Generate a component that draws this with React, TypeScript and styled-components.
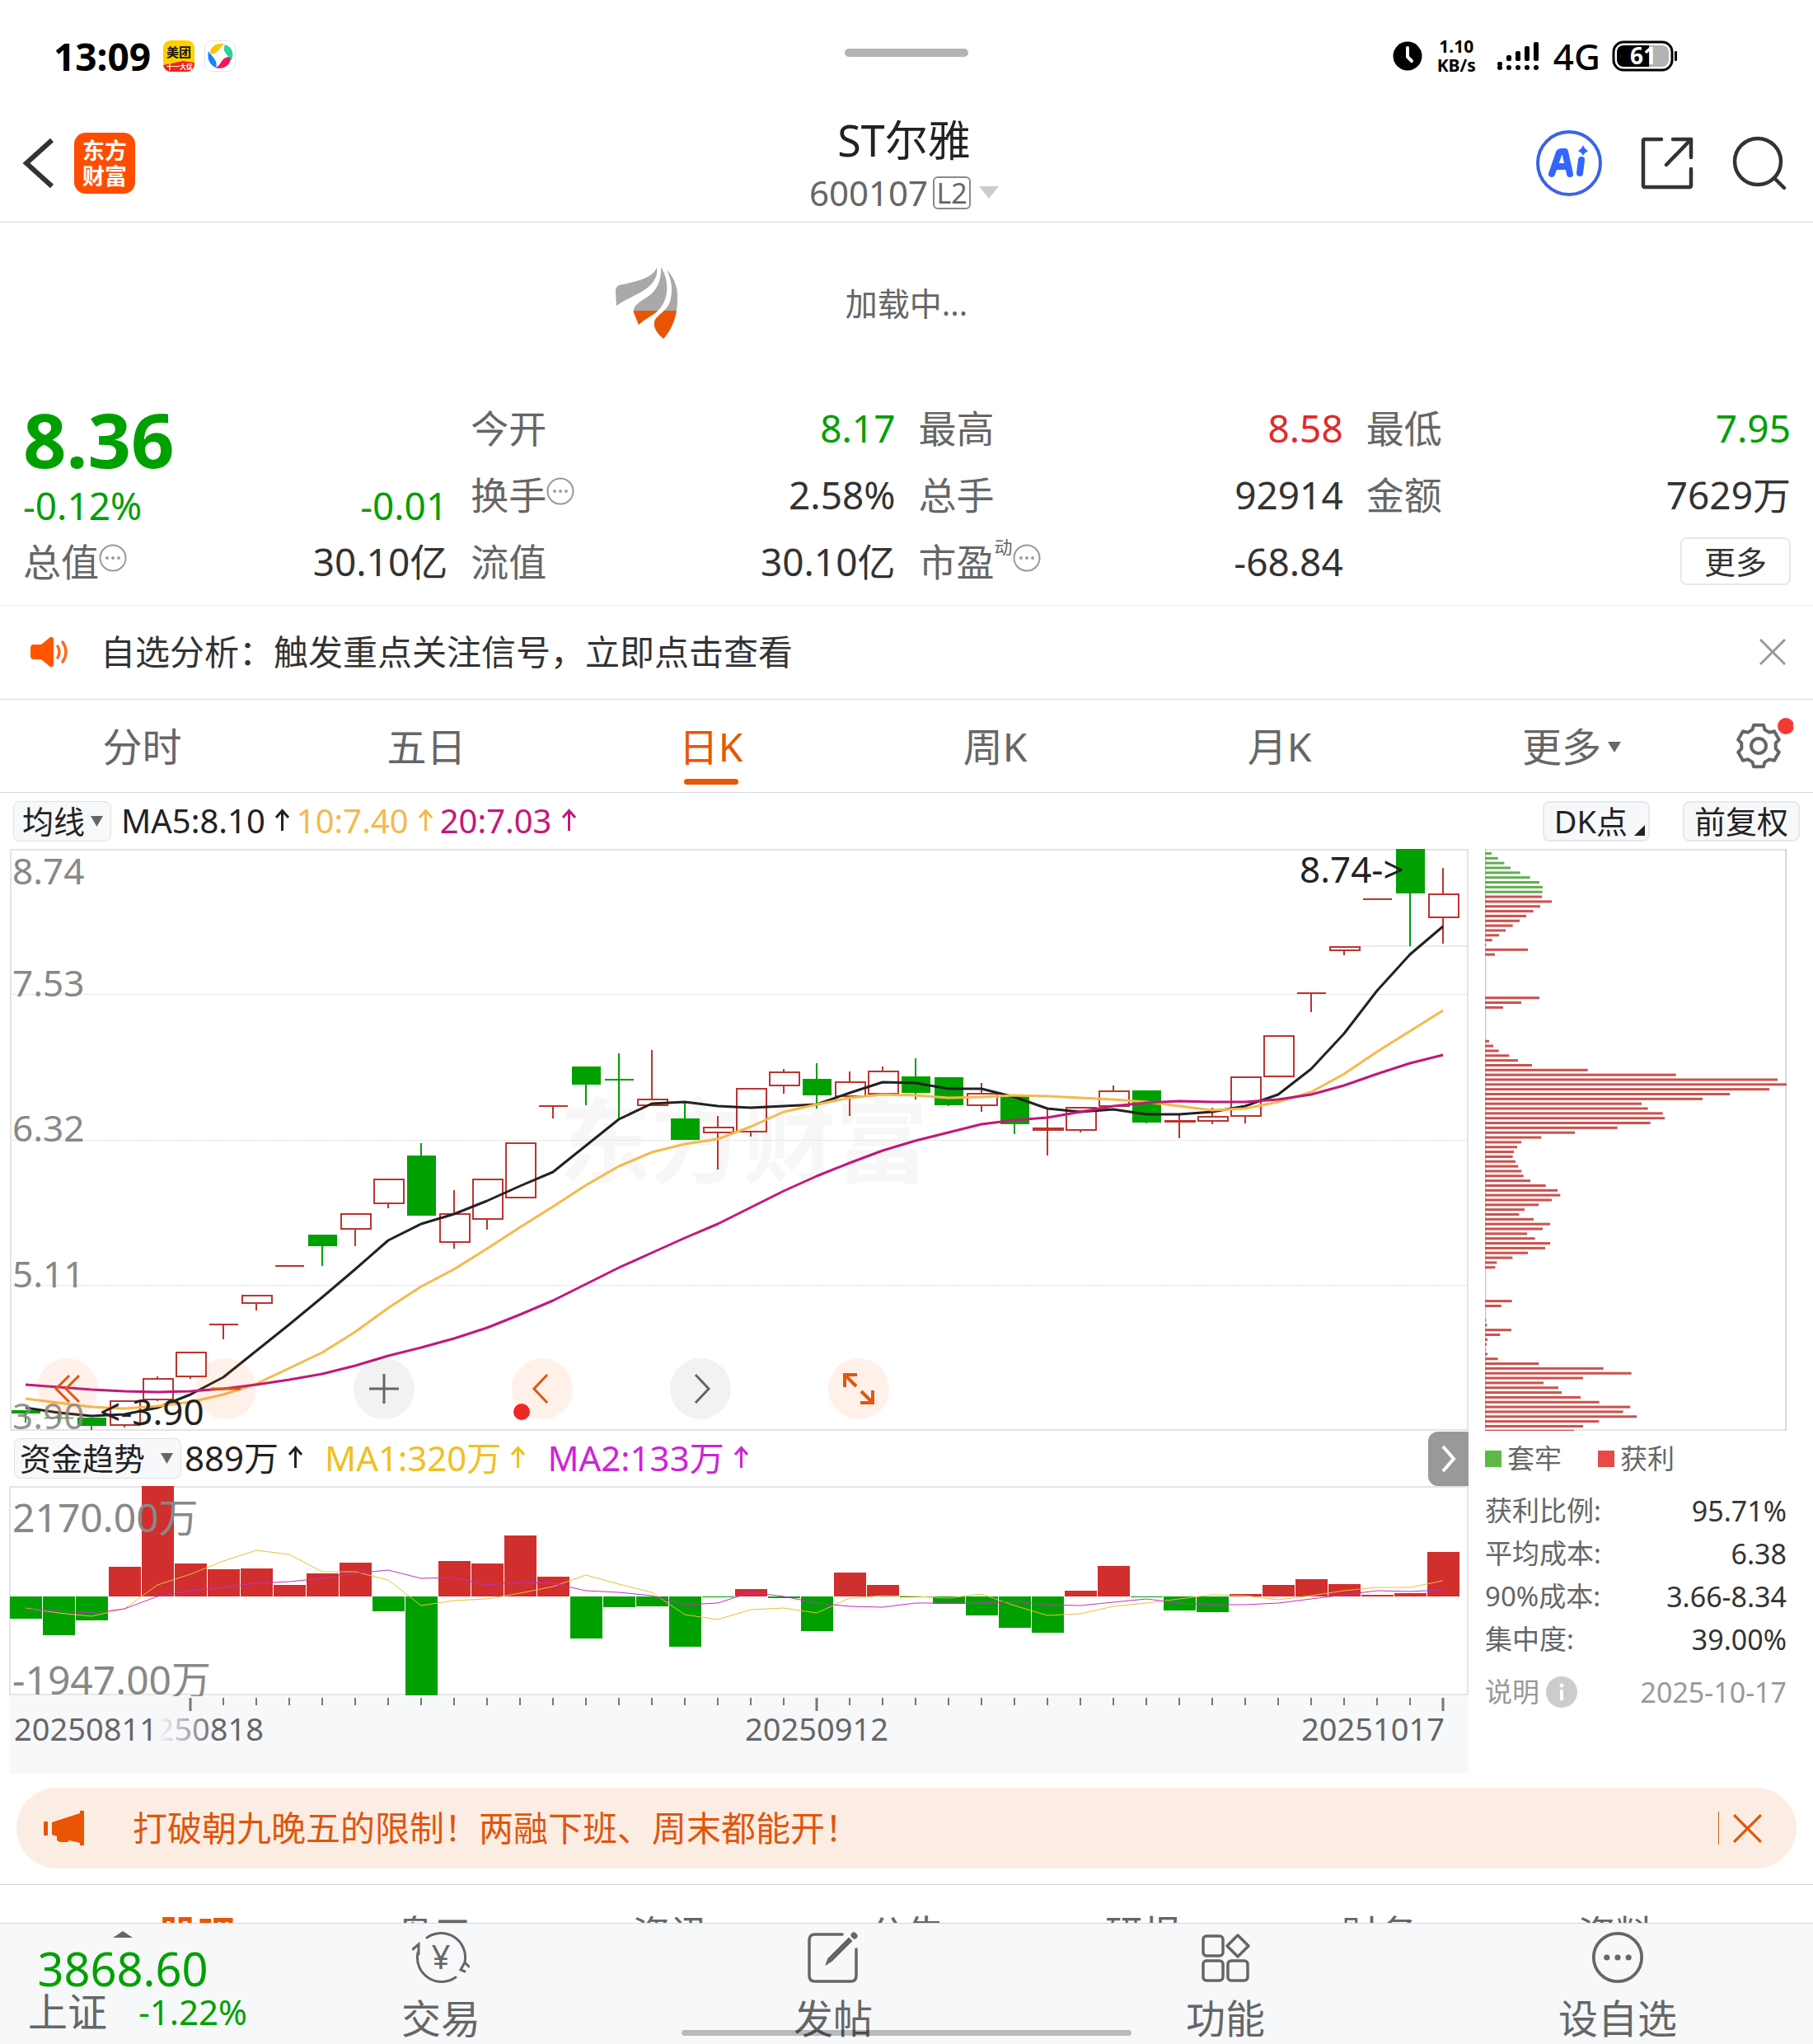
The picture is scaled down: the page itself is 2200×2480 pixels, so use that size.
import React from "react";
import styled, { createGlobalStyle } from "styled-components";

const C = {
  green: "#00a000",
  up: "#d02f2d",
  orange: "#ea5504",
  ink: "#333333",
  grey: "#666666",
  light: "#999999",
  line: "#d8d8d8",
  panel: "#f7f8fa",
  ma10: "#f5b94c",
  ma20: "#c2187a",
};
const FONT = `"Noto Sans", "Noto Sans CJK SC", sans-serif`;

const Global = createGlobalStyle`
  * { box-sizing: border-box; }
  body { margin: 0; background: #fff; color: ${C.ink}; font-family: ${FONT}; }
  button, select { font-family: inherit; color: inherit; background: none; border: 0; padding: 0; margin: 0; cursor: pointer; }
  svg { display: block; flex: none; }
  svg text { font-family: ${FONT}; }
  dl, dd, dt, h1, p { margin: 0; font-weight: 400; }
`;

/* ---------- data ---------- */

type Kind = "up" | "down";
type Candle = [Kind, number, number, number, number]; // kind, high, body top, body bottom, low

const candles: Candle[] = [
  ["down", 681, 681, 685, 696], ["down", 686, 690, 691, 696], ["down", 690, 690, 700, 705],
  ["up", 670, 670, 699, 702], ["up", 640, 643, 668, 670], ["up", 611, 611, 640, 643],
  ["up", 577, 577, 577, 595], ["up", 542, 542, 551, 560], ["up", 506, 506, 506, 506],
  ["down", 468, 468, 482, 506], ["up", 443, 443, 461, 482], ["up", 401, 401, 430, 436],
  ["down", 357, 372, 445, 445], ["up", 414, 443, 477, 485], ["up", 401, 401, 449, 462],
  ["up", 357, 357, 423, 423], ["up", 312, 312, 312, 327], ["down", 264, 264, 286, 311],
  ["down", 248, 279, 281, 327], ["up", 244, 304, 311, 311], ["down", 306, 327, 353, 353],
  ["up", 324, 338, 344, 389], ["up", 291, 291, 343, 349], ["up", 267, 271, 287, 297],
  ["down", 260, 279, 299, 315], ["up", 270, 283, 300, 324], ["up", 264, 270, 297, 297],
  ["down", 254, 276, 296, 304], ["down", 277, 277, 311, 312], ["up", 284, 297, 311, 319],
  ["down", 300, 300, 334, 346], ["up", 315, 339, 341, 372], ["up", 314, 314, 341, 344],
  ["up", 287, 294, 312, 312], ["down", 293, 293, 332, 333], ["up", 323, 330, 331, 351],
  ["up", 314, 325, 330, 334], ["up", 277, 277, 324, 333], ["up", 227, 227, 276, 276],
  ["up", 175, 175, 175, 198], ["up", 119, 119, 123, 129], ["up", 61, 61, 61, 61],
  ["down", 0, 0, 54, 118], ["up", 23, 55, 83, 115],
];

const ma5 = [678, 684, 688, 686, 678, 662, 641, 609, 577, 544, 510, 475, 455, 443, 427, 409, 392, 360, 328, 309, 307, 312, 314, 312, 310, 296, 283, 284, 291, 291, 301, 315, 319, 316, 322, 322, 319, 312, 298, 267, 224, 172, 128, 94];
const ma10 = [667, 672, 677, 679, 676, 671, 662, 649, 630, 611, 586, 557, 531, 510, 485, 459, 434, 408, 385, 368, 358, 352, 337, 319, 310, 302, 298, 299, 302, 301, 299, 300, 302, 304, 307, 312, 317, 315, 307, 295, 273, 246, 221, 196];
const ma20 = [650, 653, 656, 658, 659, 658, 655, 650, 644, 637, 627, 615, 605, 594, 581, 565, 548, 528, 508, 490, 472, 455, 435, 415, 397, 381, 366, 354, 344, 334, 329, 326, 319, 312, 308, 306, 307, 307, 304, 298, 287, 273, 260, 250];

const FLOW_ZERO = 134;
const flow = [161, 181, 163, 98, 0, 94, 101, 100, 120, 106, 93, 152, 254, 91, 94, 60, 110, 185, 147, 146, 195, 135, 125, 136, 176, 105, 120, 135, 143, 157, 172, 178, 127, 97, 135, 151, 153, 131, 120, 113, 119, 132, 130, 80];
const flowMa1 = [148, 154, 158, 149, 120, 107, 91, 78, 83, 104, 104, 114, 145, 139, 137, 130, 122, 108, 119, 129, 156, 162, 150, 148, 154, 136, 133, 134, 136, 131, 145, 157, 155, 146, 142, 137, 132, 133, 138, 133, 127, 123, 123, 115];
const flowMa2 = [149, 152, 154, 149, 134, 127, 123, 118, 116, 112, 106, 102, 112, 111, 120, 117, 118, 127, 129, 133, 144, 142, 129, 134, 142, 146, 147, 142, 142, 142, 140, 144, 145, 141, 137, 142, 144, 144, 142, 137, 132, 127, 128, 126];

const CHIP_MAX = 1098;
const gap = (n: number): number[] => Array(n).fill(0);
const chips = [
  24, 47, 70, 93, 128, 164, 198, 210, 209, 207, 243, 201, 176, 150, 126, 101, 75, 51, 26, 3, 156, 36,
  ...gap(8), 198, 132, 66, ...gap(6),
  15, 30, 50, 88, 120, 171, 374, 695, 1065, 1098, 1035, 891, 792, 570, 593, 647, 654, 602, 482, 327, 205, 132, 117, 105, 101, 111, 121, 133, 140, 165, 221, 264, 274, 243, 195, 144, 124, 177, 237, 210, 153, 182, 237, 219, 156, 100, 43, 37,
  ...gap(6), 98, 59, 0, 0,
  3, 7, 96, 55, 9, 6, 2, 9, 47, 196, 431, 533, 357, 213, 267, 279, 348, 416, 529, 503, 552, 415, 357, 324,
];
const CHIP_GREEN = 9;

const cx = (i: number) => 19 + 40 * i;
const poly = (a: number[]) => a.map((y, i) => `${cx(i)},${y}`).join(" ");

/* ---------- layout parts ---------- */

const Page = styled.div`
  display: flex;
  flex-direction: column;
  min-height: 100vh;
  overflow: hidden;
`;

const Status = styled.div`
  position: relative;
  display: flex;
  align-items: center;
  height: 136px;
  padding: 0 164px 0 65px;
  color: #000;
`;
const Clock = styled.span`
  font-size: 46px;
  font-weight: 700;
  line-height: 52px;
  margin-right: 15px;
`;
const AppIcons = styled.div`
  display: flex;
  gap: 12px;
`;
const Grip = styled.span`
  position: absolute;
  left: 50%;
  top: 59px;
  width: 150px;
  height: 10px;
  margin-left: -75px;
  border-radius: 5px;
  background: #b3b3b3;
`;
const StatusRight = styled.div`
  display: flex;
  align-items: center;
  margin-left: auto;
`;
const Speed = styled.span`
  margin: 0 26px 0 18px;
  text-align: center;
  font-size: 21px;
  font-weight: 700;
  line-height: 23px;
`;
const Network = styled.span`
  margin: 0 14px 0 16px;
  font-size: 44px;
  font-weight: 500;
  line-height: 52px;
`;

const Header = styled.header`
  display: grid;
  grid-template-columns: 1fr auto 1fr;
  grid-template-rows: 100%;
  align-items: center;
  height: 134px;
  padding: 0 32px 10px 26px;
  border-bottom: 1px solid ${C.line};
`;
const HeadSide = styled.div<{ $end?: boolean }>`
  display: flex;
  align-items: center;
  justify-content: ${(p) => (p.$end ? "flex-end" : "flex-start")};
  gap: ${(p) => (p.$end ? 47 : 24)}px;
`;
const IconButton = styled.button`
  display: flex;
  align-items: center;
  justify-content: center;
`;
const Brand = styled.a`
  display: flex;
  flex-direction: column;
  align-items: center;
  justify-content: center;
  width: 74px;
  height: 74px;
  border-radius: 14px;
  background: #ff4d00;
  color: #fff;
  font-size: 27px;
  font-weight: 700;
  line-height: 31px;
  text-decoration: none;
`;
const TitleBox = styled.div`
  padding-top: 8px;
  text-align: center;
`;
const Title = styled.h1`
  font-size: 52px;
  line-height: 64px;
  color: #222;
`;
const Code = styled.button`
  display: inline-flex;
  align-items: center;
  gap: 6px;
  font-size: 42px;
  line-height: 64px;
  color: ${C.grey};
  svg { margin-left: 4px; }
`;
const Level = styled.span`
  width: 46px;
  height: 40px;
  border: 2px solid #8a8a8a;
  border-radius: 6px;
  font-size: 34px;
  line-height: 37px;
`;

const Loader = styled.div`
  display: grid;
  grid-template-columns: 1fr auto 1fr;
  align-items: center;
  height: 196px;
  font-size: 39px;
  line-height: 48px;
  color: ${C.grey};
  svg { justify-self: end; margin-right: 202px; }
`;

const Stats = styled.dl`
  display: grid;
  grid-template-columns: repeat(4, 1fr);
  grid-template-rows: repeat(3, 81px);
  column-gap: 28px;
  padding: 12px 27px 13px 28px;
  border-bottom: 1px solid #ececec;
`;
const Quote = styled.div`
  grid-row: span 2;
  color: ${C.green};
`;
const Price = styled.p`
  font-size: 92px;
  font-weight: 700;
  line-height: 110px;
`;
const Change = styled.p`
  display: flex;
  justify-content: space-between;
  font-size: 46px;
  line-height: 50px;
`;
const Stat = styled.div`
  display: flex;
  align-items: center;
  justify-content: space-between;
  font-size: 46px;
  line-height: 60px;
`;
const StatName = styled.dt`
  display: flex;
  align-items: center;
  color: ${C.grey};
  svg { margin-bottom: 8px; }
`;
const Sup = styled.span`
  align-self: flex-start;
  font-size: 22px;
  line-height: 24px;
`;
const StatValue = styled.dd<{ $tone?: string }>`
  color: ${(p) => p.$tone || C.ink};
`;
const MoreButton = styled.button`
  align-self: center;
  justify-self: end;
  width: 134px;
  height: 58px;
  border: 2px solid #e8e8e8;
  border-radius: 8px;
  font-size: 38px;
  line-height: 50px;
`;

const Notice = styled.div`
  display: flex;
  align-items: center;
  height: 114px;
  padding: 0 33px 2px 37px;
  border-bottom: 1px solid ${C.line};
  font-size: 42px;
  line-height: 52px;
  p { flex: 1; margin-left: 36px; }
`;

const Periods = styled.nav`
  display: flex;
  height: 113px;
  padding-right: 21px;
  border-bottom: 1px solid ${C.line};
`;
const Period = styled.button<{ $on?: boolean; $last?: boolean }>`
  position: relative;
  flex: ${(p) => (p.$last ? "0 0 364px" : "1")};
  display: flex;
  align-items: center;
  justify-content: center;
  gap: 8px;
  padding-top: 2px;
  font-size: 48px;
  line-height: 60px;
  color: ${(p) => (p.$on ? C.orange : C.grey)};
  &::after {
    content: "";
    display: ${(p) => (p.$on ? "block" : "none")};
    position: absolute;
    left: 50%;
    bottom: 9px;
    width: 66px;
    height: 7px;
    margin-left: -33px;
    border-radius: 4px;
    background: ${C.orange};
  }
`;
const GearButton = styled(IconButton)`
  flex: 0 0 90px;
`;

const Toolbar = styled.div<{ $sub?: boolean }>`
  position: relative;
  display: flex;
  align-items: center;
  height: 68px;
  padding: ${(p) => (p.$sub ? "0 0 0 5px" : "0 16px")};
  font-size: ${(p) => (p.$sub ? 42 : 40)}px;
  line-height: 50px;
`;
const Picker = styled.label`
  position: relative;
  display: flex;
  svg { position: absolute; right: 10px; top: 18px; pointer-events: none; }
`;
const Select = styled.select<{ $wide?: boolean }>`
  appearance: none;
  height: 49px;
  padding: ${(p) => (p.$wide ? "0 42px 0 6px" : "0 30px 0 10px")};
  border: 1px solid #dfe1e6;
  border-radius: 8px;
  background: ${C.panel};
  color: #222;
  font-size: 38px;
  line-height: 46px;
`;
const Reading = styled.span<{ $c: string; $gap: number }>`
  display: inline-flex;
  align-items: center;
  gap: 12px;
  margin-left: ${(p) => p.$gap}px;
  color: ${(p) => p.$c};
`;
const ToolEnd = styled.div`
  display: flex;
  gap: 40px;
  margin-left: auto;
`;
const ToolButton = styled.button<{ $corner?: boolean }>`
  display: flex;
  align-items: flex-end;
  gap: 8px;
  height: 49px;
  padding: 0 ${(p) => (p.$corner ? 4 : 12)}px 0 12px;
  border: 2px solid #e6e8ed;
  border-radius: 8px;
  background: ${C.panel};
  color: #222;
  font-size: 38px;
  line-height: 45px;
  svg { margin-bottom: 5px; }
`;

const Board = styled.div`
  display: grid;
  grid-template-columns: minmax(0, 1fr) 418px;
`;
const Charts = styled.div`
  padding-left: 12px;
  svg.plot { width: 100%; height: auto; overflow: visible; }
`;
const PlotBox = styled.div`
  position: relative;
`;
const Controls = styled.div`
  position: absolute;
  left: 33px;
  bottom: 13px;
  display: flex;
  gap: 118px;
`;
const Round = styled.button<{ $warm?: boolean }>`
  position: relative;
  display: flex;
  align-items: center;
  justify-content: center;
  width: 74px;
  height: 74px;
  border-radius: 50%;
  background: ${(p) => (p.$warm ? "rgba(255, 100, 20, 0.09)" : "rgba(0, 0, 0, 0.05)")};
  color: ${(p) => (p.$warm ? "#e2560f" : C.grey)};
`;
const Badge = styled.i`
  position: absolute;
  left: 2px;
  bottom: -1px;
  width: 20px;
  height: 20px;
  border-radius: 50%;
  background: #f02622;
`;
const Drawer = styled.button`
  display: flex;
  align-items: center;
  justify-content: center;
  width: 49px;
  height: 66px;
  margin: 2px 0 0 auto;
  border-radius: 12px 0 0 12px;
  background: #999;
`;

const Side = styled.aside`
  padding: 0 32px 0 20px;
  svg.chips { width: 100%; height: auto; }
`;
const Legend = styled.div`
  display: flex;
  align-items: center;
  gap: 44px;
  height: 67px;
  font-size: 33px;
  line-height: 44px;
  color: ${C.grey};
`;
const Key = styled.span<{ $c: string }>`
  display: flex;
  align-items: center;
  gap: 7px;
  &::before { content: ""; width: 20px; height: 20px; background: ${(p) => p.$c}; }
`;
const Facts = styled.dl`
  padding: 4px 0 12px;
`;
const Fact = styled.div<{ $dim?: boolean }>`
  display: flex;
  align-items: center;
  justify-content: space-between;
  height: 52px;
  font-size: 34px;
  line-height: 44px;
  color: ${(p) => (p.$dim ? C.light : C.grey)};
  dt { font-size: 33px; }
  dd { color: ${C.ink}; }
`;
const Explain = styled.button`
  display: flex;
  align-items: center;
  gap: 8px;
  font-size: 33px;
  line-height: 44px;
`;

const Banner = styled.div`
  display: flex;
  align-items: center;
  height: 98px;
  margin: 17px 20px 19px;
  padding: 0 42px 0 33px;
  border-radius: 49px;
  background: #fcede4;
  color: #e0560c;
  font-size: 42px;
  line-height: 52px;
  a { flex: 1; margin-left: 58px; color: inherit; text-decoration: none; }
`;
const Rule = styled.span`
  width: 1px;
  height: 40px;
  margin-right: 17px;
  background: #d9631f;
`;

const Sections = styled.nav`
  display: flex;
  height: 47px;
  padding: 28px 96px 0;
  overflow: hidden;
  border-top: 1px solid ${C.line};
`;
const Section = styled.a<{ $on?: boolean }>`
  flex: 1;
  text-align: center;
  font-size: 46px;
  font-weight: ${(p) => (p.$on ? 700 : 400)};
  line-height: 60px;
  color: ${(p) => (p.$on ? C.orange : C.grey)};
  text-decoration: none;
`;

const Dock = styled.footer`
  position: relative;
  display: grid;
  grid-template-columns: 296px repeat(4, 1fr);
  height: 147px;
  border-top: 1px solid ${C.line};
  background: ${C.panel};
  color: ${C.grey};
`;
const DockItem = styled.button`
  display: flex;
  flex-direction: column;
  align-items: center;
  padding: 9px 0 0 2px;
  font-size: 48px;
  line-height: 60px;
  svg { margin-bottom: 12px; }
`;
const Index = styled.button`
  display: flex;
  flex-direction: column;
  align-items: center;
  padding: 9px 0 0 2px;
`;
const IndexValue = styled.span`
  font-size: 56px;
  line-height: 60px;
  margin-top: 7px;
  color: ${C.green};
`;
const IndexRow = styled.span`
  display: flex;
  align-items: center;
  gap: 38px;
  margin-left: 36px;
  font-size: 48px;
  line-height: 46px;
  white-space: nowrap;
  b { font-size: 42px; font-weight: 400; color: ${C.green}; }
`;
const HomeBar = styled.span`
  position: absolute;
  left: 50%;
  bottom: 10px;
  width: 546px;
  height: 7px;
  margin-left: -273px;
  border-radius: 4px;
  background: rgba(0, 0, 0, 0.25);
`;

/* ---------- icons ---------- */

const Triangle = ({ w = 15, h = 13, c = C.grey, up = false }) => (
  <svg width={w} height={h} viewBox="0 0 10 10" preserveAspectRatio="none">
    <path d={up ? "M0 10L5 0L10 10Z" : "M0 0H10L5 10Z"} fill={c} />
  </svg>
);
const Corner = () => (
  <svg width="13" height="13" viewBox="0 0 13 13">
    <path d="M13 0V13H0Z" fill="#222" />
  </svg>
);
const Arrow = () => (
  <svg width="17" height="30" viewBox="0 0 17 30" fill="none" stroke="currentColor" strokeWidth="3" aria-label="↑">
    <path d="M8.500 27V3M1 11L8.500 2.500L16 11" />
  </svg>
);
const Cross = ({ s = 32, c = C.light, w = 3 }) => (
  <svg width={s} height={s} viewBox="0 0 32 32" stroke={c} strokeWidth={w} fill="none">
    <path d="M1 1L31 31M31 1L1 31" />
  </svg>
);
const Dots = ({ s = 34, c = C.light, w = 2 }) => (
  <svg width={s} height={s} viewBox="0 0 34 34" fill="none">
    <circle cx="17" cy="17" r="15.500" stroke={c} strokeWidth={w} />
    {[10, 17, 24].map((x) => (
      <circle key={x} cx={x} cy="17" r="1.900" fill={c} />
    ))}
  </svg>
);

const Meituan = () => (
  <svg width="38" height="38" viewBox="0 0 38 38">
    <clipPath id="mt"><rect width="38" height="38" rx="9" /></clipPath>
    <g clipPath="url(#mt)">
      <rect width="38" height="38" fill="#ffd000" />
      <path d="M0 30L24 25L38 27V38H0Z" fill="#f5201b" />
      <text x="19" y="20" fontSize="15" fontWeight="700" textAnchor="middle" fill="#111">美团</text>
      <text x="20" y="35" fontSize="8" fontWeight="700" textAnchor="middle" fill="#fff">十一大促</text>
    </g>
  </svg>
);
const Swirl = () => (
  <svg width="38" height="38" viewBox="0 0 38 38">
    <rect x=".5" y=".5" width="37" height="37" rx="9" fill="#fff" stroke="#e6e6e6" />
    <path d="M7 14C8 6 17 3 24 4C19 8 19 14 9 17Z" fill="#ffc400" />
    <path d="M25 5C34 8 37 17 32 25C30 18 22 15 24 8Z" fill="#2bd19a" />
    <path d="M5 13C3 22 6 30 14 33C17 25 10 21 5 13Z" fill="#1683ff" />
    <path d="M32 22C31 31 22 36 13 33C21 31 19 22 29 20Z" fill="#f5155d" />
  </svg>
);
const ClockIcon = () => (
  <svg width="36" height="36" viewBox="0 0 36 36">
    <circle cx="18" cy="18" r="17.500" />
    <path d="M18 8V19L23 24" stroke="#fff" strokeWidth="4" fill="none" strokeLinecap="round" />
  </svg>
);
const Signal = () => (
  <svg width="52" height="36" viewBox="0 0 52 36">
    {[28, 17, 12, 6, 1].map((y, i) => (
      <React.Fragment key={i}>
        <rect x={i * 11} y={i ? y : 25} width="6" height={i ? 24 - y : 5} rx="2" />
        <rect x={i * 11} y="29" width="6" height="6" rx="3" />
      </React.Fragment>
    ))}
  </svg>
);
const Battery = () => (
  <svg width="80" height="38" viewBox="0 0 80 38">
    <rect x="2" y="2" width="71" height="34" rx="12" fill="#fff" stroke="#000" strokeWidth="3" />
    <clipPath id="bt"><rect x="6" y="6" width="63" height="26" rx="8" /></clipPath>
    <g clipPath="url(#bt)">
      <rect x="6" y="6" width="39" height="26" />
      <rect x="45" y="6" width="24" height="26" fill="#b3b3b3" />
    </g>
    <rect x="76" y="13" width="3" height="12" rx="1" />
    <text x="38" y="29" fontSize="28" fontWeight="700" textAnchor="middle" fill="#fff">61</text>
  </svg>
);

const AiIcon = () => (
  <svg width="80" height="80" viewBox="0 0 80 80">
    <circle cx="40" cy="40" r="38" fill="none" stroke="#3b63e8" strokeWidth="4" />
    <path d="M19 53L28 27Q29 26 31 26H35L41 53M24 44H38" fill="none" stroke="#3366ff" strokeWidth="8" strokeLinejoin="round" strokeLinecap="round" />
    <path d="M55 36L53 52" stroke="#3366ff" strokeWidth="8" strokeLinecap="round" />
    <path d="M57 18Q59 23 63 25Q59 27 57 31Q55 27 51 25Q55 23 57 18Z" fill="#3366ff" />
  </svg>
);
const ShareIcon = () => (
  <svg width="64" height="64" viewBox="0 0 64 64" fill="none" stroke="#333" strokeWidth="4.500" strokeLinejoin="round" strokeLinecap="round">
    <path d="M25 3H5Q3 3 3 5V59Q3 61 5 61H59Q61 61 61 59V39M39 3H61V25M61 3L31 34" />
  </svg>
);
const SearchIcon = () => (
  <svg width="66" height="66" viewBox="0 0 66 66" fill="none" stroke="#333" strokeWidth="4.500" strokeLinecap="round">
    <circle cx="31" cy="31" r="28" />
    <path d="M51 51L63 63" />
  </svg>
);
const BackIcon = () => (
  <svg width="40" height="62" viewBox="0 0 40 62" fill="none" stroke="#333" strokeWidth="6">
    <path d="M37 3L6 31L37 59" />
  </svg>
);

const Feathers = ({ c }: { c: string }) => (
  <g fill={c}>
    <path d="M50 1C44 14 24 18 4 22Q0 24 0 30L1 47C8 42 20 36 30 31C44 23 52 13 50 1Z" />
    <path d="M55 0C56 16 50 30 36 38C24 45 21 50 22 55L28 70C36 62 48 58 54 50C64 38 66 18 55 0Z" />
    <path d="M62 3C72 14 76 26 75 40C75 60 68 76 58 87C50 80 46 74 47 66C50 58 62 54 66 42C70 28 68 16 62 3Z" />
  </g>
);
const LoaderLogo = () => (
  <svg width="77" height="88" viewBox="0 0 77 88">
    <clipPath id="lg"><rect y="53" width="77" height="35" /></clipPath>
    <Feathers c="#a9a9a9" />
    <g clipPath="url(#lg)"><Feathers c={C.orange} /></g>
  </svg>
);

const Speaker = () => (
  <svg width="49" height="38" viewBox="0 0 49 38">
    <path d="M4 10H13L24 1Q27 0 28 3V35Q27 38 24 37L13 28H4Q0 28 0 24V14Q0 10 4 10Z" fill="#ff5500" />
    <path d="M33 12Q37 19 33 26M39 7Q47 19 39 31" fill="none" stroke="#ff6a1f" strokeWidth="3.500" strokeLinecap="round" />
  </svg>
);
const Megaphone = () => (
  <svg width="50" height="42" viewBox="0 0 50 42" fill={C.orange}>
    <rect y="13" width="5" height="17" />
    <path d="M10 14L44 3V0H49V42H44V39L31 36L29 38H20L16 36V31L10 29Z" />
  </svg>
);

const gearPath = (() => {
  const pt = (r: number, deg: number) => {
    const a = (deg * Math.PI) / 180;
    return `${(30 + r * Math.sin(a)).toFixed(2)} ${(34 - r * Math.cos(a)).toFixed(2)}`;
  };
  const out: string[] = [];
  for (let k = 0; k < 6; k++) {
    const a = k * 60;
    out.push(pt(21, a - 21), pt(26, a - 13), pt(26, a + 13), pt(21, a + 21));
  }
  return "M" + out.join("L") + "Z";
})();
const Gear = () => (
  <svg width="84" height="68" viewBox="-12 0 84 68" fill="none" stroke={C.grey} strokeWidth="4" strokeLinejoin="round">
    <path d={gearPath} />
    <circle cx="30" cy="34" r="9" />
    <circle cx="63" cy="10" r="10" fill="#f53a35" stroke="none" />
  </svg>
);

const TradeIcon = () => (
  <svg width="70" height="64" viewBox="0 0 70 64" fill="none" stroke={C.grey} strokeWidth="3" strokeLinecap="round">
    <path d="M18 8A29.500 29.500 0 0 1 64 38M64 49L59 47L64 38L69 43M53 56A29.500 29.500 0 0 1 7 26" />
    <path d="M1 22L8 16V28" />
    <text x="35" y="46" fontSize="40" textAnchor="middle" fill={C.grey} stroke="none">¥</text>
  </svg>
);
const PostIcon = () => (
  <svg width="64" height="64" viewBox="0 0 64 64" fill="none" stroke={C.grey} strokeWidth="3.500" strokeLinecap="round">
    <path d="M43 4H10Q3 4 3 11V54Q3 61 10 61H53Q60 61 60 54V22" />
    <path d="M23 41L26 33L51 8L55 12L31 36Z" fill={C.grey} strokeWidth="1" strokeLinejoin="round" />
    <path d="M57 5L58 6" strokeWidth="7" />
  </svg>
);
const GridIcon = () => (
  <svg width="64" height="64" viewBox="0 0 64 64" fill="none" stroke={C.grey} strokeWidth="3.500" strokeLinejoin="round">
    <rect x="5" y="6" width="24" height="24" rx="4" />
    <rect x="5" y="36" width="24" height="24" rx="4" />
    <rect x="35" y="36" width="24" height="24" rx="4" />
    <path d="M47 5L60 18L47 31L34 18Z" />
  </svg>
);

/* ---------- charts ---------- */

const CandleMark = ({ d, i }: { d: Candle; i: number }) => {
  const [kind, hi, top, bot, lo] = d;
  const x = cx(i);
  const down = kind === "down";
  const c = down ? C.green : "#bd3430";
  return (
    <g stroke={c} strokeWidth="2">
      {hi < top && <path d={`M${x} ${hi}V${top}`} />}
      {lo > bot && <path d={`M${x} ${bot}V${lo}`} />}
      {top === bot ? (
        <path d={`M${x - 17} ${top}H${x + 18}`} />
      ) : down ? (
        <rect x={x - 17} y={top} width="35" height={bot - top} fill={c} stroke="none" />
      ) : (
        <rect x={x - 17} y={top} width="36" height={bot - top} fill="none" />
      )}
    </g>
  );
};

const PriceChart = () => (
  <svg className="plot" viewBox="0 0 1770 705" role="img" aria-label="日K">
    <text x="666" y="397" fontSize="112" fontWeight="700" fill="#f7f7f7">东方财富</text>
    {[176, 353, 529].map((y) => (
      <path key={y} d={`M0 ${y + 0.5}H1770`} stroke="#dcdcdc" strokeWidth="1" strokeDasharray="2 1" />
    ))}
    <rect x="1" y="1" width="1768" height="704" fill="none" stroke="#e4e4e4" strokeWidth="2" />
    <path d="M1638 118H1769" stroke="#d5d5d5" />
    {candles.map((d, i) => <CandleMark key={i} d={d} i={i} />)}
    <g fill="none" strokeWidth="3" strokeLinejoin="round">
      <polyline points={poly(ma5)} stroke="#222" />
      <polyline points={poly(ma10)} stroke={C.ma10} />
      <polyline points={poly(ma20)} stroke={C.ma20} />
    </g>
    <g fontSize="44" fill="#888">
      {([["8.74", 43], ["7.53", 179], ["6.32", 355], ["5.11", 532], ["3.90", 704]] as [string, number][]).map(([t, y]) => (
        <text key={t} x="3" y={y} fillOpacity={t === "3.90" ? 0.9 : 1}>{t}</text>
      ))}
    </g>
    <g fontSize="44" fill="#222">
      <text x="1565" y="41">8.74-&gt;</text>
      <text x="109" y="699">&lt;-3.90</text>
    </g>
  </svg>
);

const FlowChart = () => (
  <svg className="plot" viewBox="0 0 1770 254" role="img" aria-label="资金趋势">
    <path d="M0 1H1770M0 253H1770M1769 0V254" stroke="#e4e4e4" strokeWidth="2" />
    <path d="M0 0V254" stroke="#e4e4e4" strokeWidth="2" />
    {flow.map((y, i) => {
      const up = y < FLOW_ZERO;
      return <rect key={i} x={cx(i) - 19} y={up ? y : FLOW_ZERO} width="39" height={Math.abs(y - FLOW_ZERO)} fill={up ? C.up : C.green} />;
    })}
    <g fill="none" strokeWidth="1">
      <polyline points={poly(flowMa1)} stroke="#e8c23a" />
      <polyline points={poly(flowMa2)} stroke="#c030c8" />
    </g>
    <g fontSize="48" fill="#888">
      <text x="3" y="56">2170.00万</text>
      <text x="3" y="253">-1947.00万</text>
    </g>
  </svg>
);

const TimeAxis = () => (
  <svg className="plot" viewBox="0 0 1770 95">
    <defs>
      <linearGradient id="fade">
        <stop offset="0" stopColor={C.panel} />
        <stop offset=".72" stopColor={C.panel} />
        <stop offset="1" stopColor={C.panel} stopOpacity="0" />
      </linearGradient>
    </defs>
    <rect y="1" width="1770" height="94" fill={C.panel} />
    {flow.slice(5).map((_, k) => {
      const i = k + 5;
      const major = i === 5 || i === 24 || i === 43;
      return <path key={i} d={`M${cx(i)} 3V${major ? 19 : 12}`} stroke="#777" strokeWidth={major ? 3 : 2} />;
    })}
    <g fontSize="38" fill={C.grey}>
      <text x="221" y="55" textAnchor="middle">20250818</text>
      <rect x="0" y="20" width="250" height="50" fill="url(#fade)" />
      <text x="5" y="55">20250811</text>
      <text x="979" y="55" textAnchor="middle">20250912</text>
      <text x="1741" y="55" textAnchor="end">20251017</text>
    </g>
  </svg>
);

const ChipChart = () => (
  <svg className="chips" viewBox="0 0 366 706" role="img" aria-label="筹码">
    <path d="M0 1H366M0 705H366" stroke="#ccc" strokeWidth="1" />
    <path d="M0 0V706M366 0V706" stroke="#ccc" strokeWidth="3" />
    {chips.map((v, k) =>
      v ? <rect key={k} x="0" y={4 + k * 5.84} width={(v / CHIP_MAX) * 366} height="3" fill={k < CHIP_GREEN ? "#62ad52" : "#cf504d"} /> : null
    )}
  </svg>
);

/* ---------- page ---------- */

const stats: { name: string; value: string; tone?: string; info?: boolean; sup?: string }[] = [
  { name: "今开", value: "8.17", tone: C.green },
  { name: "最高", value: "8.58", tone: "#e22b2b" },
  { name: "最低", value: "7.95", tone: C.green },
  { name: "换手", value: "2.58%", info: true },
  { name: "总手", value: "92914" },
  { name: "金额", value: "7629万" },
  { name: "总值", value: "30.10亿", info: true },
  { name: "流值", value: "30.10亿" },
  { name: "市盈", value: "-68.84", info: true, sup: "动" },
];
const facts = [["获利比例:", "95.71%"], ["平均成本:", "6.38"], ["90%成本:", "3.66-8.34"], ["集中度:", "39.00%"]];

const Stroke = ({ d, s = 44, w = 3 }: { d: string; s?: number; w?: number }) => (
  <svg width={s} height={s} viewBox="0 0 44 44" fill="none" stroke="currentColor" strokeWidth={w}>
    <path d={d} />
  </svg>
);

export default function App() {
  return (
    <Page>
      <Global />
      <Status>
        <Clock>13:09</Clock>
        <AppIcons><Meituan /><Swirl /></AppIcons>
        <Grip />
        <StatusRight>
          <ClockIcon />
          <Speed>1.10<br />KB/s</Speed>
          <Signal />
          <Network>4G</Network>
          <Battery />
        </StatusRight>
      </Status>

      <Header>
        <HeadSide>
          <IconButton aria-label="返回"><BackIcon /></IconButton>
          <Brand href="#"><span>东方</span><span>财富</span></Brand>
        </HeadSide>
        <TitleBox>
          <Title>ST尔雅</Title>
          <Code>600107<Level>L2</Level><Triangle w={24} h={15} c="#ccc" /></Code>
        </TitleBox>
        <HeadSide $end>
          <IconButton aria-label="AI"><AiIcon /></IconButton>
          <IconButton aria-label="分享"><ShareIcon /></IconButton>
          <IconButton aria-label="搜索"><SearchIcon /></IconButton>
        </HeadSide>
      </Header>

      <Loader><LoaderLogo /><span>加载中...</span></Loader>

      <Stats>
        <Quote>
          <Price>8.36</Price>
          <Change><span>-0.12%</span><span>-0.01</span></Change>
        </Quote>
        {stats.map((s) => (
          <Stat key={s.name}>
            <StatName>{s.name}{s.sup && <Sup>{s.sup}</Sup>}{s.info && <Dots />}</StatName>
            <StatValue $tone={s.tone}>{s.value}</StatValue>
          </Stat>
        ))}
        <MoreButton>更多</MoreButton>
      </Stats>

      <Notice>
        <Speaker />
        <p>自选分析：触发重点关注信号，立即点击查看</p>
        <IconButton aria-label="关闭"><Cross /></IconButton>
      </Notice>

      <Periods>
        <Period>分时</Period>
        <Period>五日</Period>
        <Period $on>日K</Period>
        <Period>周K</Period>
        <Period>月K</Period>
        <Period $last>更多<Triangle w={16} h={13} /></Period>
        <GearButton aria-label="设置"><Gear /></GearButton>
      </Periods>

      <Toolbar>
        <Picker>
          <Select aria-label="均线"><option>均线</option></Select>
          <Triangle />
        </Picker>
        <Reading $c="#222" $gap={12}>MA5:8.10<Arrow /></Reading>
        <Reading $c={C.ma10} $gap={9}>10:7.40<Arrow /></Reading>
        <Reading $c={C.ma20} $gap={9}>20:7.03<Arrow /></Reading>
        <ToolEnd>
          <ToolButton $corner>DK点<Corner /></ToolButton>
          <ToolButton>前复权</ToolButton>
        </ToolEnd>
      </Toolbar>

      <Board>
        <Charts>
          <PlotBox>
            <PriceChart />
            <Controls>
              <Round $warm aria-label="最左"><Stroke d="M24 6L8 22L24 38M36 6L20 22L36 38" /></Round>
              <Round $warm aria-label="缩小"><Stroke d="M4 22H40" /></Round>
              <Round aria-label="放大"><Stroke d="M4 22H40M22 4V40" /></Round>
              <Round $warm aria-label="左移"><Stroke d="M28 5L12 22L28 39" /><Badge /></Round>
              <Round aria-label="右移"><Stroke d="M16 5L32 22L16 39" /></Round>
              <Round $warm aria-label="全屏"><Stroke d="M5 20V5H20M5 5L19 19M39 24V39H24M39 39L25 25" w={4} /></Round>
            </Controls>
          </PlotBox>
          <Toolbar $sub>
            <Picker>
              <Select $wide aria-label="指标"><option>资金趋势</option></Select>
              <Triangle />
            </Picker>
            <Reading $c="#222" $gap={4}>889万<Arrow /></Reading>
            <Reading $c="#f0c020" $gap={27}>MA1:320万<Arrow /></Reading>
            <Reading $c="#cf22d8" $gap={27}>MA2:133万<Arrow /></Reading>
            <Drawer aria-label="展开">
              <svg width="18" height="34" viewBox="0 0 18 34" fill="none" stroke="#fff" strokeWidth="4"><path d="M2 2L15 17L2 32" /></svg>
            </Drawer>
          </Toolbar>
          <FlowChart />
          <TimeAxis />
        </Charts>
        <Side>
          <ChipChart />
          <Legend><Key $c="#5cb946">套牢</Key><Key $c="#e84a48">获利</Key></Legend>
          <Facts>
            {facts.map(([k, v]) => (
              <Fact key={k}><dt>{k}</dt><dd>{v}</dd></Fact>
            ))}
          </Facts>
          <Fact $dim>
            <Explain>
              说明
              <svg width="38" height="38" viewBox="0 0 38 38"><circle cx="19" cy="19" r="19" fill="#ccc" /><circle cx="19" cy="11" r="2.500" fill="#fff" /><path d="M19 16V29" stroke="#fff" strokeWidth="4" /></svg>
            </Explain>
            <span>2025-10-17</span>
          </Fact>
        </Side>
      </Board>

      <Banner>
        <Megaphone />
        <a href="#">打破朝九晚五的限制！两融下班、周末都能开！</a>
        <Rule />
        <IconButton aria-label="关闭"><Cross s={35} c="#e0560c" /></IconButton>
      </Banner>

      <Sections>
        {["股吧", "盘口", "资讯", "公告", "研报", "财务", "资料"].map((t, i) => (
          <Section key={t} href="#" $on={i === 0}>{t}</Section>
        ))}
      </Sections>

      <Dock>
        <Index>
          <Triangle w={24} h={8} up />
          <IndexValue>3868.60</IndexValue>
          <IndexRow>上证<b>-1.22%</b></IndexRow>
        </Index>
        <DockItem><TradeIcon />交易</DockItem>
        <DockItem><PostIcon />发帖</DockItem>
        <DockItem><GridIcon />功能</DockItem>
        <DockItem><Dots s={64} c={C.grey} />设自选</DockItem>
        <HomeBar />
      </Dock>
    </Page>
  );
}
